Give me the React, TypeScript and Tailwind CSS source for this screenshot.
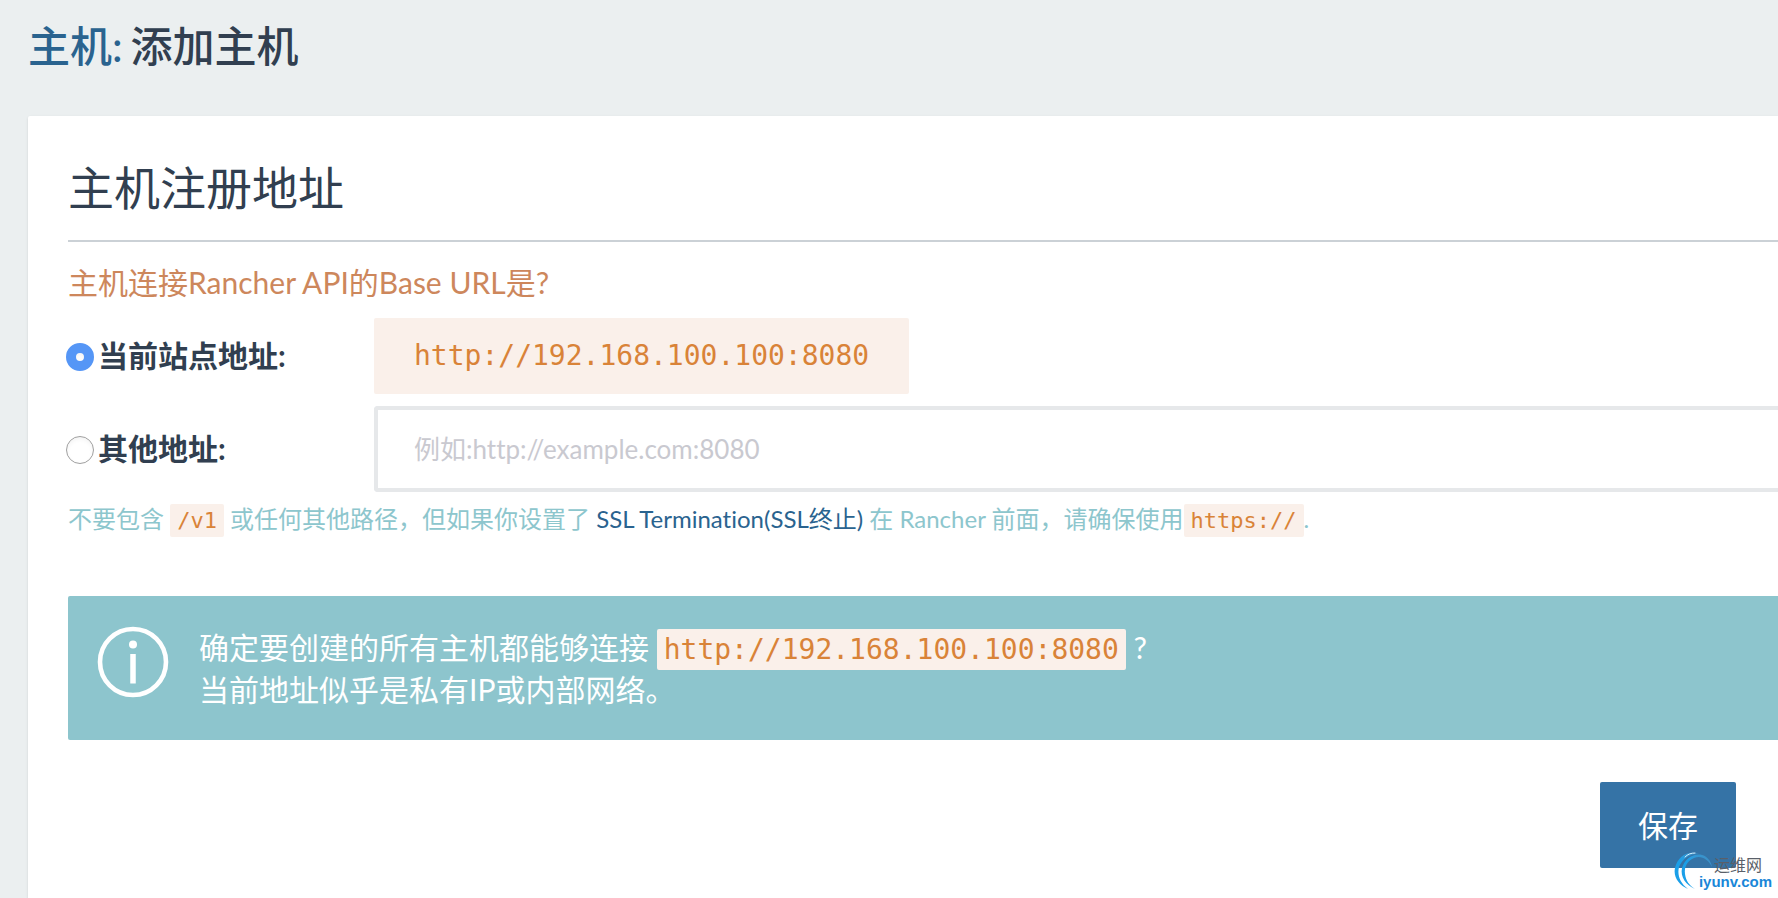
import { useState } from "react";

const CURRENT_URL = "http://192.168.100.100:8080";

function InlineCode({ children, className = "" }: { children: React.ReactNode; className?: string }) {
    return (
        <code className={`rounded-xs bg-[#faf0ea] py-1 font-['DejaVu_Sans_Mono',monospace] leading-none text-[#d98338] ${className}`}>
            {children}
        </code>
    );
}

function InfoIcon() {
    return (
        <svg className="size-[72px] shrink-0" viewBox="0 0 72 72" fill="none" aria-hidden="true">
            <circle cx="36" cy="36" r="33" stroke="currentColor" strokeWidth="4.6" />
            <circle cx="36" cy="18.5" r="4" fill="currentColor" />
            <path d="M36 28v29.5" stroke="currentColor" strokeWidth="5.5" />
        </svg>
    );
}

function Watermark() {
    return (
        <div className="absolute right-1.5 bottom-2 h-10 w-[98px]">
            <svg className="absolute top-0 left-0 h-10 w-10" viewBox="0 0 40 40" fill="none" aria-hidden="true">
                <defs>
                    <linearGradient id="swirl" x1="0" y1="1" x2="1" y2="0">
                        <stop offset="0" stopColor="#1b9fe8" />
                        <stop offset="0.5" stopColor="#1b9fe8" />
                        <stop offset="1" stopColor="#4db4ec" stopOpacity="0.3" />
                    </linearGradient>
                </defs>
                <path d="M14 39C5 35 -1 27 1 18C4 6 14 0 25 4C16 3 8 9 5 17C3 25 6 33 14 39Z" fill="url(#swirl)" />
                <path d="M21 39C12 35 6 27 8 18C11 8 20 3 28 5C33 6 37 11 38 17C34 9 27 5 20 8C13 11 10 17 11 24C12 31 15 35 21 39Z" fill="url(#swirl)" />
                <path d="M11 7C14 4 17 3 21 3" stroke="#d8f1ff" strokeWidth="1" strokeLinecap="round" />
            </svg>
            <div className="absolute right-0 bottom-0 flex flex-col items-end">
                <span className="mr-2.5 text-base leading-[18px] text-[#5a5f69]">运维网</span>
                <span className="font-['Liberation_Sans',sans-serif] text-[15px] leading-4 font-bold text-[#1a87d8]">iyunv.com</span>
            </div>
        </div>
    );
}

export default function App() {
    const [source, setSource] = useState("current");
    const [otherUrl, setOtherUrl] = useState("");

    const radioClass =
        "mt-1 size-7 shrink-0 appearance-none rounded-full border border-[#a0a0a0] bg-white inset-shadow-sm checked:border-[10px] checked:border-[#5596f6]";
    const labelClass = "-ml-0.5 flex items-center gap-1 pb-0.5 text-[30px] leading-[44px] font-bold";

    return (
        <div className="relative min-h-screen overflow-hidden bg-[#ebeff0] pl-7 font-[Lato,'Noto_Sans_CJK_SC',sans-serif] text-[#313f50] [font-variant-ligatures:none]">
            <h1 className="flex h-[116px] items-start gap-2 pt-[14px] text-[42px] leading-[64px] font-medium">
                <a href="#" className="text-[#2a638f]">主机:</a>
                <span>添加主机</span>
            </h1>

            <main className="min-h-[calc(100vh-116px)] rounded-tl-xs bg-white pl-10 shadow-sm">
                <h2 className="border-b-2 border-[#cbd1d6] pt-10 pb-5 text-[46px] leading-[64px]">
                    主机注册地址
                </h2>

                <form onSubmit={(e) => e.preventDefault()}>
                    <p className="pt-[18px] pb-[14px] text-[30px] leading-[44px] text-[#cd875c]">
                        主机连接Rancher API的Base URL是?
                    </p>

                    <div className="grid grid-cols-[306px_1fr] items-center gap-y-3">
                        <label className={labelClass}>
                            <input
                                type="radio"
                                name="source"
                                checked={source === "current"}
                                onChange={() => setSource("current")}
                                className={radioClass}
                            />
                            当前站点地址:
                        </label>
                        <div className="justify-self-start rounded-xs bg-[#faf0ea] px-10 font-['DejaVu_Sans_Mono',monospace] text-[28px] leading-[76px] text-[#d98338]">
                            {CURRENT_URL}
                        </div>

                        <label className={labelClass}>
                            <input
                                type="radio"
                                name="source"
                                checked={source === "other"}
                                onChange={() => setSource("other")}
                                className={radioClass}
                            />
                            其他地址:
                        </label>
                        <input
                            type="text"
                            aria-label="其他地址"
                            placeholder="例如:http://example.com:8080"
                            value={otherUrl}
                            onChange={(e) => setOtherUrl(e.target.value)}
                            className="h-[86px] w-full rounded-l-sm border-4 border-r-0 border-[#e6e8ea] px-9 text-[26px] placeholder:text-[#c9c9d0]"
                        />
                    </div>

                    <p className="pt-2 text-[24px] leading-[38px] text-[#8dc6cd]">
                        不要包含 <InlineCode className="px-[7px] text-[22px]">/v1</InlineCode> 或任何其他路径，但如果你设置了{" "}
                        <a href="#" className="text-[#2a638f]">SSL Termination(SSL终止)</a> 在 Rancher 前面，请确保使用
                        <InlineCode className="px-[7px] text-[22px]">https://</InlineCode>.
                    </p>

                    <div className="mt-[58px] flex h-36 items-start gap-[30px] rounded-l-xs bg-[#8dc5cd] pt-[30px] pl-[29px] text-white">
                        <InfoIcon />
                        <p className="text-[30px] leading-[42px]">
                            确定要创建的所有主机都能够连接 <InlineCode className="px-[7px] text-[28px]">{CURRENT_URL}</InlineCode> ?
                            <br />
                            当前地址似乎是私有IP或内部网络。
                        </p>
                    </div>

                    <div className="flex justify-end pt-[42px] pr-[42px]">
                        <button type="submit" className="rounded-xs bg-[#3573a6] px-[38px] text-[30px] leading-[86px] text-white">
                            保存
                        </button>
                    </div>
                </form>
            </main>

            <Watermark />
        </div>
    );
}
